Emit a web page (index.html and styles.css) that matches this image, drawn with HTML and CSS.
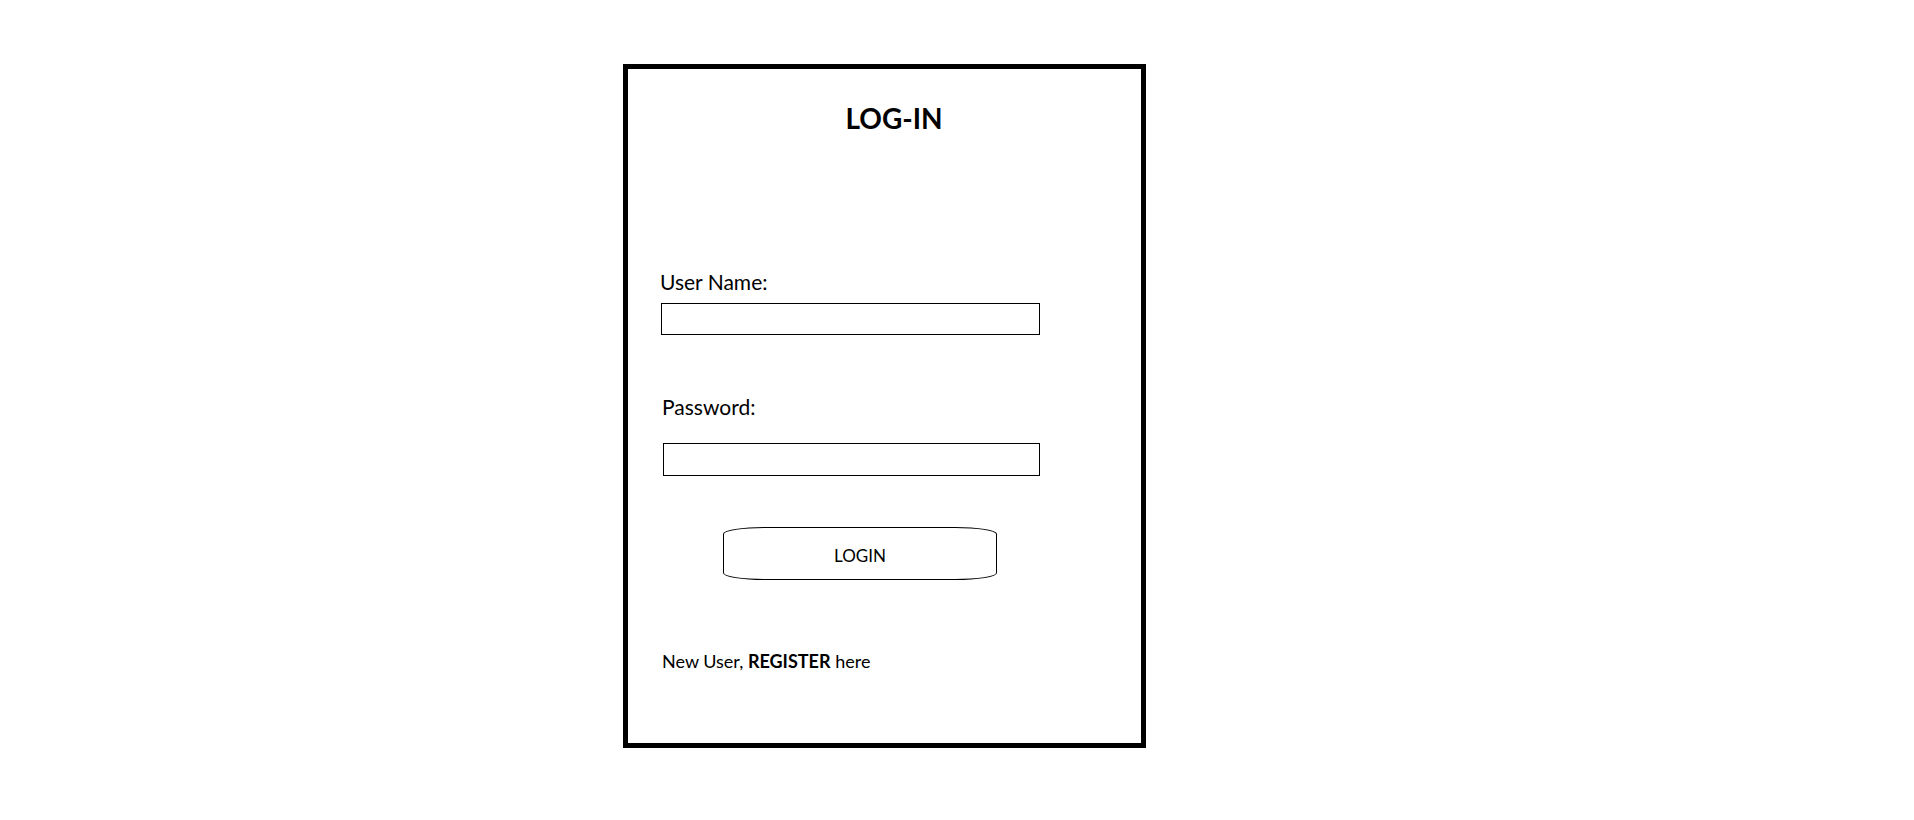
FILE: index.html
```html
<!DOCTYPE html>
<html lang="en">
<head>
<meta charset="utf-8">
<title>Log-in</title>
<link rel="stylesheet" href="styles.css">
</head>
<body>
<div class="card">
  <h1 class="title">LOG-IN</h1>
  <label class="label label-user" for="user">User Name:</label>
  <input class="field field-user" id="user" type="text">
  <label class="label label-pass" for="pass">Password:</label>
  <input class="field field-pass" id="pass" type="password">
  <button class="login-btn" type="button">LOGIN</button>
  <p class="register">New User, <strong>REGISTER</strong> here</p>
</div>
</body>
</html>
```
FILE: styles.css
```css
html, body {
  margin: 0;
  padding: 0;
  background: #ffffff;
}

body {
  font-family: Lato, "Open Sans", "Liberation Sans", sans-serif;
  color: #000000;
}

.card {
  box-sizing: border-box;
  width: 523px;
  height: 684px;
  margin: 64px 0 0 623px;
  border: 5px solid #000000;
  padding: 32px 0 0 32px;
  display: flex;
  flex-direction: column;
  align-items: flex-start;
}

.title {
  align-self: stretch;
  margin: 0;
  padding-right: 13px;
  text-align: center;
  font-size: 28px;
  line-height: 34px;
  font-weight: 700;
}

.label {
  display: block;
  font-size: 21px;
  line-height: 25px;
}

.label-user {
  margin-top: 134px;
}

.label-pass {
  margin-top: 59px;
  margin-left: 2px;
}

.field {
  box-sizing: border-box;
  display: block;
  margin: 0;
  padding: 0 6px;
  border: 1px solid #000000;
  border-radius: 0;
  background: #ffffff;
  outline: none;
  font-family: inherit;
  font-size: 16px;
}

.field-user {
  width: 379px;
  height: 32px;
  margin-top: 9px;
  margin-left: 1px;
}

.field-pass {
  width: 377px;
  height: 33px;
  margin-top: 24px;
  margin-left: 3px;
}

.login-btn {
  box-sizing: border-box;
  width: 274px;
  height: 53px;
  margin: 51px 0 0 63px;
  padding: 4px 0 0 0;
  border: 1px solid #000000;
  border-radius: 42px / 7px;
  background: #ffffff;
  color: #000000;
  font-family: inherit;
  font-size: 17px;
  line-height: 20px;
  cursor: pointer;
}

.register {
  margin: 70px 0 0 2px;
  font-size: 18px;
  line-height: 22px;
}

.register strong {
  font-weight: 700;
}
```
